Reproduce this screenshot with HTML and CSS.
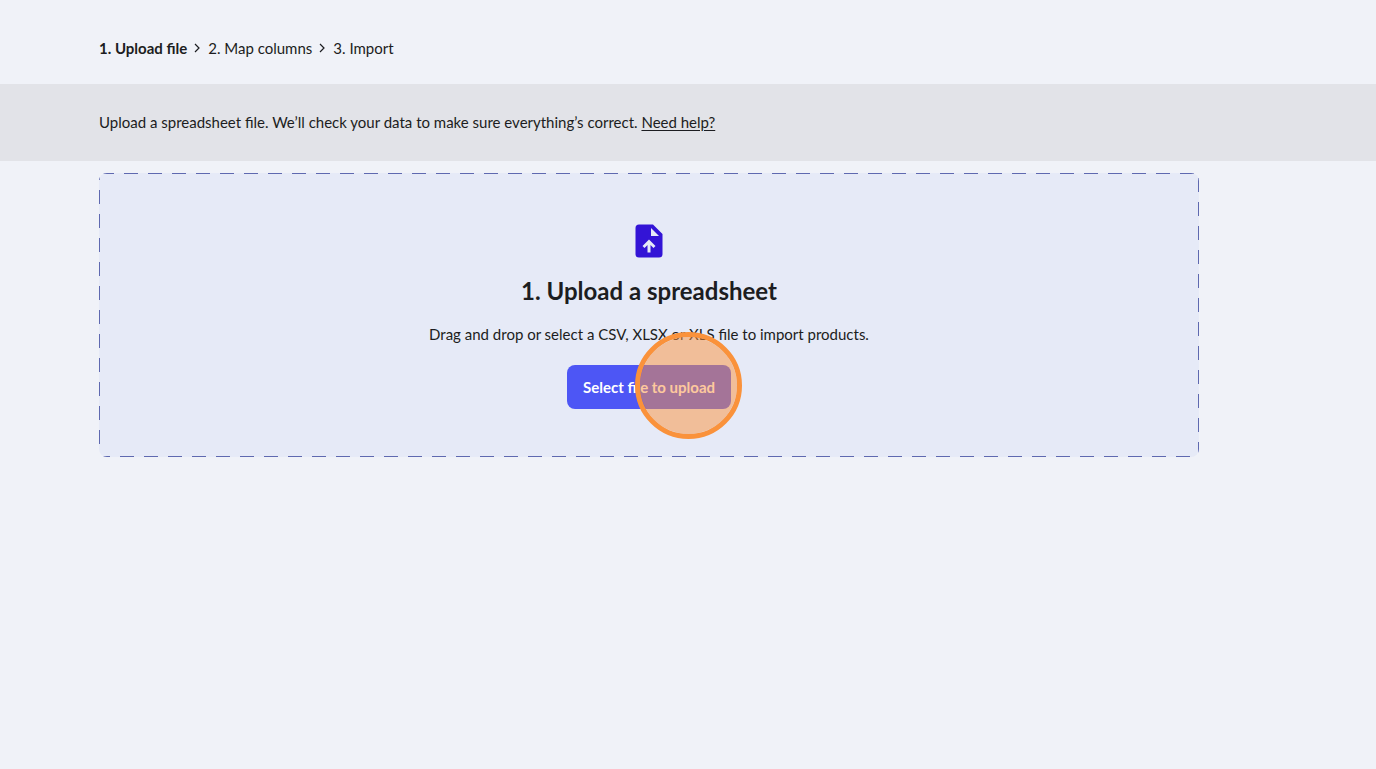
FILE: index.html
```html
<!DOCTYPE html>
<html lang="en">
<head>
    <meta charset="UTF-8">
    <meta name="viewport" content="width=device-width, initial-scale=1.0">
    <title>Import products</title>
    <link rel="stylesheet" href="styles.css">
</head>
<body>
    <nav class="steps" aria-label="Import steps">
        <ol class="steps__list">
            <li class="steps__item steps__item--active" aria-current="step">1. Upload file</li>
            <li class="steps__item">
                <svg class="steps__chevron" viewBox="0 0 6 10" aria-hidden="true"><path d="M1 1l4 4-4 4"/></svg>
                2. Map columns
            </li>
            <li class="steps__item">
                <svg class="steps__chevron" viewBox="0 0 6 10" aria-hidden="true"><path d="M1 1l4 4-4 4"/></svg>
                3. Import
            </li>
        </ol>
    </nav>

    <div class="notice">
        <p class="notice__text">Upload a spreadsheet file. We’ll check your data to make sure everything’s correct. <a class="notice__link" href="#help">Need help?</a></p>
    </div>

    <main class="content">
        <section class="dropzone">
            <svg class="dropzone__border" aria-hidden="true">
                <rect width="100%" height="100%"/>
            </svg>
            <svg class="dropzone__icon" viewBox="0 0 28 34" aria-hidden="true">
                <path fill-rule="evenodd" d="M4 .5h14l9.500 9.500v20a3.500 3.500 0 0 1-3.500 3.500H4a3.500 3.500 0 0 1-3.500-3.500V4a3.500 3.500 0 0 1 3.500-3.500zM16 4v8h8zM14 15.500l-6.500 6.500 2 2 3-3v7.500h3v-7.500l3 3 2-2z"/>
            </svg>
            <h1 class="dropzone__title">1. Upload a spreadsheet</h1>
            <p class="dropzone__text">Drag and drop or select a CSV, XLSX or XLS file to import products.</p>
            <div class="dropzone__action">
                <button class="dropzone__button" type="button">Select file to upload</button>
                <span class="click-marker"></span>
            </div>
        </section>
    </main>
</body>
</html>
```
FILE: styles.css
```css
* {
    box-sizing: border-box;
}

body {
    margin: 0;
    background: #f0f2f8;
    color: #1c1d21;
    font-family: Lato, "Liberation Sans", sans-serif;
    font-size: 15px;
    line-height: 24px;
}

.steps {
    padding: 36px 99px 24px;
}

.steps__list {
    display: flex;
    gap: 7px;
    margin: 0;
    padding: 0;
    list-style: none;
}

.steps__item {
    display: flex;
    align-items: center;
    gap: 8px;
}

.steps__item--active {
    font-weight: bold;
}

.steps__chevron {
    width: 6px;
    height: 10px;
    fill: none;
    stroke: #1c1d21;
    stroke-width: 1.2;
}

.notice {
    padding: 26px 99px 27px;
    background: #e2e3e8;
}

.notice__text {
    margin: 0;
}

.notice__link {
    color: inherit;
    text-underline-offset: 2px;
}

.content {
    padding: 12px 99px;
}

.dropzone {
    position: relative;
    display: flex;
    flex-direction: column;
    align-items: center;
    max-width: 1100px;
    padding: 51px 24px 48px;
    border-radius: 8px;
    background: #e6eaf7;
    text-align: center;
}

/* the outer half of the stroke is cut off, which leaves a 1px line */
.dropzone__border {
    position: absolute;
    top: 0;
    left: 0;
    width: 100%;
    height: 100%;
    border-radius: 8px;
    overflow: hidden;
    fill: none;
    stroke: #5f69b0;
    stroke-width: 2;
    stroke-dasharray: 14 10;
    stroke-dashoffset: 23;
    pointer-events: none;
}

.dropzone__icon {
    width: 28px;
    height: 34px;
    fill: #3314d6;
}

.dropzone__title {
    margin: 17px 0 0;
    font-size: 24px;
    line-height: 32px;
}

.dropzone__text {
    margin: 15px 0 19px;
}

.dropzone__action {
    position: relative;
}

.dropzone__button {
    display: block;
    height: 44px;
    padding: 0 16px;
    border: none;
    border-radius: 8px;
    background: #4d56f5;
    color: white;
    font: inherit;
    font-weight: bold;
    cursor: pointer;
}

.click-marker {
    position: absolute;
    top: -33px;
    left: 68px;
    width: 107px;
    height: 107px;
    border: 5px solid #fa923b;
    border-radius: 50%;
    background: rgba(251, 146, 60, 0.5);
    background-clip: padding-box;
    pointer-events: none;
}
```
